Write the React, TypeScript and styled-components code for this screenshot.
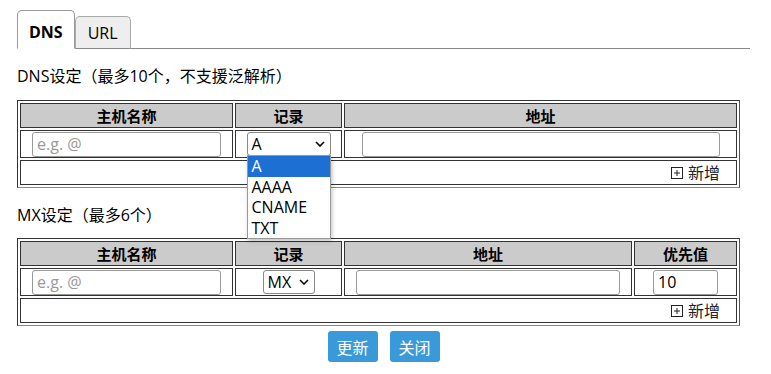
import styled, { createGlobalStyle } from "styled-components";

const GlobalStyle = createGlobalStyle`
  body {
    margin: 0;
    font-family: "Open Sans", "Noto Sans CJK SC", sans-serif;
    font-size: 16px;
    color: #000;
    background: #fff;
  }
`;

const Page = styled.div`
  width: 733px;
  padding: 10px 0 0 17px;
`;

const TabBar = styled.div`
  display: flex;
  align-items: flex-end;
  border-bottom: 1px solid #888;
  height: 38px;
`;

const Tab = styled.div<{ active?: boolean }>`
  display: flex;
  align-items: center;
  justify-content: center;
  box-sizing: border-box;
  height: ${(p) => (p.active ? "39px" : "33px")};
  margin-bottom: -1px;
  padding: 0 ${(p) => (p.active ? "11px" : "12px")};
  border: 1px solid ${(p) => (p.active ? "#999" : "#aaa")};
  border-bottom: ${(p) => (p.active ? "1px solid #fff" : "1px solid #888")};
  border-radius: 5px 5px 0 0;
  background: ${(p) => (p.active ? "#fff" : "#eee")};
  font-weight: ${(p) => (p.active ? 700 : 400)};
  font-size: 16px;
  padding-top: ${(p) => (p.active ? "4px" : "0")};
`;

const Caption = styled.div<{ top: number }>`
  margin-top: ${(p) => p.top}px;
  height: 22px;
  line-height: 22px;
  font-size: 16px;
`;

const Grid = styled.table<{ top: number }>`
  width: 723px;
  margin-top: ${(p) => p.top}px;
  border: 1px solid #333;
  border-bottom-color: #888;
  border-right-color: #555;
  border-spacing: 2px;
  border-collapse: separate;
  font-size: 15px;
  line-height: 18px;
`;

const Head = styled.th<{ w?: number }>`
  background: #cbcbcb;
  border: 1px solid #333;
  height: 23px;
  padding: 0;
  font-weight: 700;
  font-size: 15px;
  ${(p) => (p.w ? `width: ${p.w}px;` : "")}
`;

const Cell = styled.td<{ right?: boolean }>`
  border: 1px solid #333;
  height: ${(p) => (p.right ? "23px" : "26px")};
  padding: 0;
  text-align: ${(p) => (p.right ? "right" : "center")};
  ${(p) => (p.right ? "padding-right: 16px;" : "")}
`;

const Field = styled.input<{ w: number }>`
  box-sizing: border-box;
  width: ${(p) => p.w}px;
  height: 25px;
  border: 1px solid #999;
  border-radius: 3px;
  padding: 0 4px;
  font: 16px "Open Sans", "Noto Sans CJK SC", sans-serif;
  color: #000;
  vertical-align: middle;
  &::placeholder {
    color: #999;
  }
`;

const SelectWrap = styled.div`
  position: relative;
  display: inline-block;
  vertical-align: middle;
`;

const SelectBox = styled.div<{ w: number }>`
  box-sizing: border-box;
  width: ${(p) => p.w}px;
  height: 24px;
  border: 1px solid #888;
  border-radius: 3px;
  display: flex;
  align-items: center;
  justify-content: space-between;
  padding: 0 5px 0 4px;
  background: #fff;
  text-align: left;
  font-size: 16px;
`;

const DropList = styled.div`
  position: absolute;
  left: 0;
  top: 23px;
  width: 84px;
  box-sizing: border-box;
  background: #fff;
  border: 1px solid #999;
  box-shadow: 1px 2px 4px rgba(0, 0, 0, 0.25);
  z-index: 5;
  text-align: left;
`;

const Option = styled.div<{ selected?: boolean }>`
  height: 20.5px;
  line-height: 20px;
  padding-left: 4px;
  font-size: 16px;
  background: ${(p) => (p.selected ? "#1e6fd4" : "#fff")};
  color: ${(p) => (p.selected ? "#fff" : "#000")};
`;

const AddLink = styled.span`
  display: inline-flex;
  align-items: center;
  gap: 5px;
  font-size: 16px;
  color: #222;
`;

const Actions = styled.div`
  display: flex;
  justify-content: center;
  gap: 12px;
  margin-top: 5px;
`;

const Button = styled.button`
  width: 50px;
  height: 31px;
  border: none;
  border-radius: 3px;
  background: #3a9ad9;
  color: #fff;
  font: 16px "Noto Sans CJK SC", sans-serif;
  padding: 0;
`;

const Chevron = () => (
  <svg width="10" height="6" viewBox="0 0 10 6">
    <path d="M1 1l4 4 4-4" fill="none" stroke="#000" strokeWidth="1.6" />
  </svg>
);

const PlusBox = () => (
  <svg width="12" height="12" viewBox="0 0 12 12">
    <rect x="0.5" y="0.5" width="11" height="11" fill="none" stroke="#222" />
    <path d="M3 6h6M6 3v6" stroke="#222" />
  </svg>
);

function Select({ value, w, open }: { value: string; w: number; open?: boolean }) {
  return (
    <SelectWrap>
      <SelectBox w={w}>
        <span>{value}</span>
        <Chevron />
      </SelectBox>
      {open && (
        <DropList>
          {["A", "AAAA", "CNAME", "TXT"].map((o) => (
            <Option key={o} selected={o === value}>
              {o}
            </Option>
          ))}
        </DropList>
      )}
    </SelectWrap>
  );
}

export default function App() {
  return (
    <>
      <GlobalStyle />
      <Page>
        <TabBar>
          <Tab active>DNS</Tab>
          <Tab>URL</Tab>
        </TabBar>
        <Caption top={16}>DNS设定（最多10个，不支援泛解析）</Caption>
        <Grid top={13}>
          <tbody>
            <tr>
              <Head w={211}>主机名称</Head>
              <Head w={105}>记录</Head>
              <Head>地址</Head>
            </tr>
            <tr>
              <Cell>
                <Field w={189} placeholder="e.g. @" />
              </Cell>
              <Cell>
                <Select value="A" w={84} open />
              </Cell>
              <Cell>
                <Field w={358} />
              </Cell>
            </tr>
            <tr>
              <Cell right colSpan={3}>
                <AddLink>
                  <PlusBox />
                  新增
                </AddLink>
              </Cell>
            </tr>
          </tbody>
        </Grid>
        <Caption top={16}>MX设定（最多6个）</Caption>
        <Grid top={12}>
          <tbody>
            <tr>
              <Head w={211}>主机名称</Head>
              <Head w={105}>记录</Head>
              <Head>地址</Head>
              <Head w={101}>优先值</Head>
            </tr>
            <tr>
              <Cell>
                <Field w={189} placeholder="e.g. @" />
              </Cell>
              <Cell>
                <Select value="MX" w={52} />
              </Cell>
              <Cell>
                <Field w={264} />
              </Cell>
              <Cell>
                <Field w={65} defaultValue="10" />
              </Cell>
            </tr>
            <tr>
              <Cell right colSpan={4}>
                <AddLink>
                  <PlusBox />
                  新增
                </AddLink>
              </Cell>
            </tr>
          </tbody>
        </Grid>
        <Actions>
          <Button>更新</Button>
          <Button>关闭</Button>
        </Actions>
      </Page>
    </>
  );
}
